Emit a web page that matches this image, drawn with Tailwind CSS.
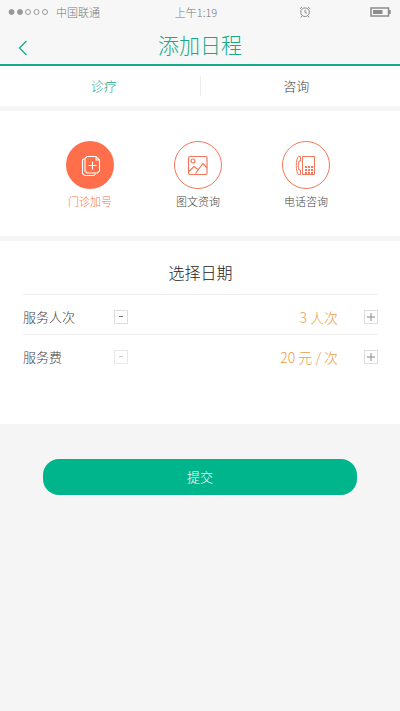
<!DOCTYPE html>
<html lang="zh-CN">
<head>
<meta charset="utf-8">
<meta name="viewport" content="width=device-width, initial-scale=1">
<title>添加日程</title>
<script src="https://cdn.jsdelivr.net/npm/@tailwindcss/browser@4"></script>
</head>
<body class="min-h-screen bg-[#f5f5f5] font-['Noto_Sans_CJK_SC',sans-serif] font-light text-[#444]">
<header class="border-b-2 border-[#16a98a] bg-[#f7f7f7]">
  <div class="grid h-6 grid-cols-3 items-center px-2 text-[11px] text-[#777]">
    <div class="flex items-center gap-2">
      <svg class="h-2 w-10" viewBox="0 0 40 8" fill="none" stroke="#999" aria-hidden="true">
        <circle cx="3.5" cy="4" r="2.5" fill="#999"/><circle cx="12" cy="4" r="2.5" fill="#999"/><circle cx="20" cy="4" r="2.5"/><circle cx="28.5" cy="4" r="2.5"/><circle cx="37" cy="4" r="2.5"/>
      </svg>
      <span>中国联通</span>
    </div>
    <time class="pr-2 text-center">上午1:19</time>
    <div class="flex items-center justify-between pl-[35px]">
      <svg class="h-3 w-3" viewBox="0 0 12 12" fill="none" stroke="#8c8c8c" aria-hidden="true">
        <circle cx="6" cy="6.2" r="4.3"/><path d="M6 3.8v2.6l2 1M.8 3 3 1M11.2 3 9 1M3 10l-1.2 1.5M9 10l1.2 1.5"/>
      </svg>
      <svg class="h-[10px] w-[22px]" viewBox="0 0 22 10" aria-hidden="true">
        <rect x="1" y="1" width="17.500" height="8" fill="none" stroke="#8c8c8c" stroke-width="1.5"/><rect x="3" y="3" width="9.5" height="4" fill="#8c8c8c"/><path d="M19 3h1.700v4H19z" fill="#8c8c8c"/>
      </svg>
    </div>
  </div>
  <div class="grid h-10 grid-cols-[44px_1fr_44px] items-center text-[#16a98a]">
    <a href="#" aria-label="返回" class="flex h-full items-center pl-[18px] pt-2">
      <svg class="h-4 w-[10px]" viewBox="0 0 10 16" fill="none" stroke="currentColor" stroke-width="1.3" aria-hidden="true"><path d="M8.5 1 1.5 8l7 7"/></svg>
    </a>
    <h1 class="text-center text-[21px] leading-8">添加日程</h1>
  </div>
</header>
<main>
  <nav class="flex h-10 items-center bg-white px-2 text-[13px]">
    <button type="button" class="h-5 flex-1 leading-5 text-[#16a98a]">诊疗</button>
    <span class="h-5 w-px bg-[#ececec]"></span>
    <button type="button" class="h-5 flex-1 leading-5">咨询</button>
  </nav>
  <section class="mt-[5px] grid h-[125px] grid-cols-3 bg-white pl-9 pr-10 pt-[30px] text-[11px]">
    <button type="button" class="flex flex-col items-center gap-1 text-[#ff6f4b]">
      <span class="flex size-12 items-center justify-center rounded-full bg-[#ff6f4b]">
        <svg class="size-6" viewBox="0 0 24 24" fill="none" stroke="#fff" stroke-width="1.1" aria-hidden="true">
          <path d="M9 3.500h9l3.500 3.500v11L19.500 20H9l-2-2V5.500zM18 3.500V7h3.500M14.500 8.500v8M10.500 12.500h8"/>
          <path d="M7 6H5.500l-1 1v13.500l2 2H16l1.500-2"/>
        </svg>
      </span>
      <span class="leading-4">门诊加号</span>
    </button>
    <button type="button" class="flex flex-col items-center gap-1">
      <span class="flex size-12 items-center justify-center rounded-full border border-[#f4775c]">
        <svg class="size-6" viewBox="0 0 24 24" fill="none" stroke="#f4775c" stroke-width="1.2" aria-hidden="true">
          <rect x="2.5" y="3.500" width="18.500" height="18" rx="1.5"/><circle cx="7" cy="8" r="2"/><path d="m3 18.500 5-5 4 3M9.500 20.500l7.500-10 4 4.500"/>
        </svg>
      </span>
      <span class="leading-4">图文资询</span>
    </button>
    <button type="button" class="flex flex-col items-center gap-1">
      <span class="flex size-12 items-center justify-center rounded-full border border-[#f4775c]">
        <svg class="size-6" viewBox="0 0 24 24" fill="none" stroke="#f4775c" stroke-width="1" aria-hidden="true">
          <path d="M8.500 3.500h12v18h-12zM6.500 3.500H4.500C1.500 6 1.500 19 4.500 21.500h2v-4.500H5c-1-3-1-6 0-9h1.500z"/>
          <path stroke-width="2" d="M11 14h2m1 0h2m1 0h2M11 17h2m1 0h2m1 0h2M11 20h2m1 0h2m1 0h2"/>
        </svg>
      </span>
      <span class="leading-4">电话咨询</span>
    </button>
  </section>
  <section class="mt-[5px] h-[183px] bg-white pl-[23px] pr-[22px] text-[13px]">
    <h2 class="flex h-[53px] items-center justify-center pt-2 text-base text-[#222]">选择日期</h2>
    <div class="flex h-10 items-center border-t border-[#eee] pt-1">
      <span class="w-[91px]">服务人次</span>
      <button type="button" aria-label="减少服务人次" class="flex size-[14px] items-center justify-center border border-[#ddd]"><span class="h-px w-1 bg-[#777]"></span></button>
      <output class="flex-1 pr-[26px] text-right text-sm text-[#e9a04a]">3 人次</output>
      <button type="button" aria-label="增加服务人次" class="flex size-[14px] items-center justify-center border border-[#ddd]"><svg class="size-2" viewBox="0 0 8 8" stroke="#888" aria-hidden="true"><path d="M4 0v8M0 4h8"/></svg></button>
    </div>
    <div class="flex h-10 items-center border-t border-[#eee] pt-1">
      <span class="w-[91px]">服务费</span>
      <button type="button" aria-label="减少服务费" class="flex size-[14px] items-center justify-center border border-[#e8e8e8]"><span class="h-px w-1 bg-[#ccc]"></span></button>
      <output class="flex-1 pr-[26px] text-right text-sm text-[#e9a04a]">20 元 / 次</output>
      <button type="button" aria-label="增加服务费" class="flex size-[14px] items-center justify-center border border-[#ddd]"><svg class="size-2" viewBox="0 0 8 8" stroke="#888" aria-hidden="true"><path d="M4 0v8M0 4h8"/></svg></button>
    </div>
  </section>
  <div class="px-[43px] pt-[35px]">
    <button type="submit" class="h-9 w-full rounded-2xl bg-[#00b58c] text-[13px] text-white">提交</button>
  </div>
</main>
</body>
</html>
